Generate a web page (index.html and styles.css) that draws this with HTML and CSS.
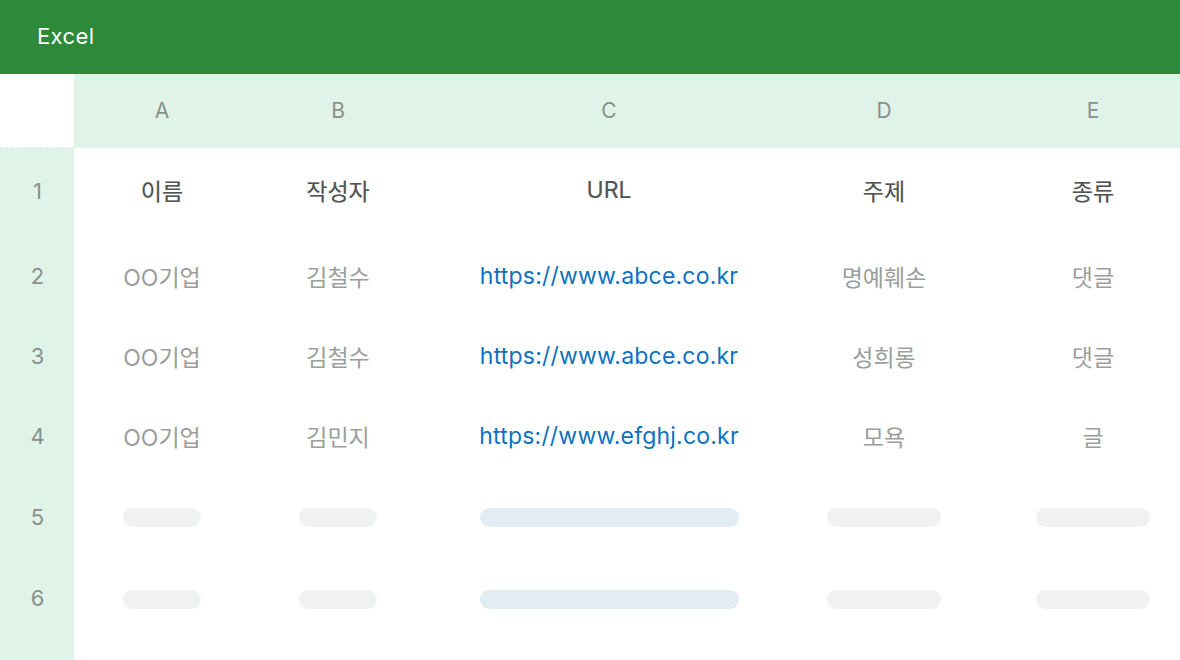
FILE: index.html
```html
<!DOCTYPE html>
<html lang="ko">
<head>
  <meta charset="UTF-8">
  <meta name="viewport" content="width=device-width, initial-scale=1.0">
  <title>Excel</title>
  <link rel="stylesheet" href="styles.css">
</head>
<body>
  <!-- Title bar -->
  <header class="app-bar">Excel</header>

  <!-- Sheet -->
  <div class="sheet">
    <div class="corner"></div>
    <div class="col-head">A</div>
    <div class="col-head">B</div>
    <div class="col-head">C</div>
    <div class="col-head">D</div>
    <div class="col-head">E</div>

    <div class="row-head first">1</div>
    <div class="cell title first">이름</div>
    <div class="cell title first">작성자</div>
    <div class="cell title first">URL</div>
    <div class="cell title first">주제</div>
    <div class="cell title first">종류</div>

    <div class="row-head">2</div>
    <div class="cell">OO기업</div>
    <div class="cell">김철수</div>
    <div class="cell link">https://www.abce.co.kr</div>
    <div class="cell">명예훼손</div>
    <div class="cell">댓글</div>

    <div class="row-head">3</div>
    <div class="cell">OO기업</div>
    <div class="cell">김철수</div>
    <div class="cell link">https://www.abce.co.kr</div>
    <div class="cell">성희롱</div>
    <div class="cell">댓글</div>

    <div class="row-head">4</div>
    <div class="cell">OO기업</div>
    <div class="cell">김민지</div>
    <div class="cell link">https://www.efghj.co.kr</div>
    <div class="cell">모욕</div>
    <div class="cell">글</div>

    <div class="row-head">5</div>
    <div class="cell"><span class="bar short"></span></div>
    <div class="cell"><span class="bar short"></span></div>
    <div class="cell"><span class="bar url"></span></div>
    <div class="cell"><span class="bar mid"></span></div>
    <div class="cell"><span class="bar mid"></span></div>

    <div class="row-head">6</div>
    <div class="cell"><span class="bar short"></span></div>
    <div class="cell"><span class="bar short"></span></div>
    <div class="cell"><span class="bar url"></span></div>
    <div class="cell"><span class="bar mid"></span></div>
    <div class="cell"><span class="bar mid"></span></div>

    <div class="row-head tail"></div>
  </div>
</body>
</html>
```

FILE: styles.css
```css
/* General */
body {
  margin: 0;
  width: 1180px;
  height: 660px;
  overflow: hidden;
  background: #fff;
  font-family: Inter, "Noto Sans CJK KR", sans-serif;
}

/* Title bar */
.app-bar {
  height: 74px;
  box-sizing: border-box;
  padding: 0 0 2px 37px;
  display: flex;
  align-items: center;
  background-color: #2c8a3a;
  color: #fff;
  font-size: 22px;
  letter-spacing: 0.4px;
}

/* Sheet grid */
.sheet {
  display: grid;
  grid-template-columns: 74px 176px 176px 366px 184px 234px;
  grid-template-rows: 74px 88px 80px 80px 80px 81px 82px 40px;
}

.corner {
  background: #fff;
  border-bottom: 1px dashed #e4e8e6;
}

.col-head {
  display: flex;
  align-items: center;
  justify-content: center;
  background-color: #dff3e8;
  color: #8a8f8c;
  font-size: 21px;
  padding-bottom: 1px;
}

.row-head {
  display: flex;
  align-items: center;
  justify-content: center;
  padding-left: 2px;
  background-color: #dff3e8;
  color: #8a8f8c;
  font-size: 22px;
  border-right: 1px dashed #e8ece9;
}

.row-head.first {
  padding-bottom: 3px;
}

.cell {
  display: flex;
  align-items: center;
  justify-content: center;
  color: #9a9e9c;
  font-size: 23px;
  white-space: nowrap;
}

.cell.first {
  padding-bottom: 4px;
}

.cell.title {
  color: #505452;
  -webkit-text-stroke: 0.2px #505452;
}

.cell.link {
  color: #0b72bf;
  letter-spacing: 0.2px;
}

/* Placeholder bars */
.bar {
  display: block;
  height: 19px;
  border-radius: 10px;
  background-color: #f0f2f2;
  margin-top: 2px;
}

.bar.short { width: 78px; }
.bar.mid { width: 114px; }
.bar.url {
  width: 259px;
  background-color: #e1ecf3;
}
```
